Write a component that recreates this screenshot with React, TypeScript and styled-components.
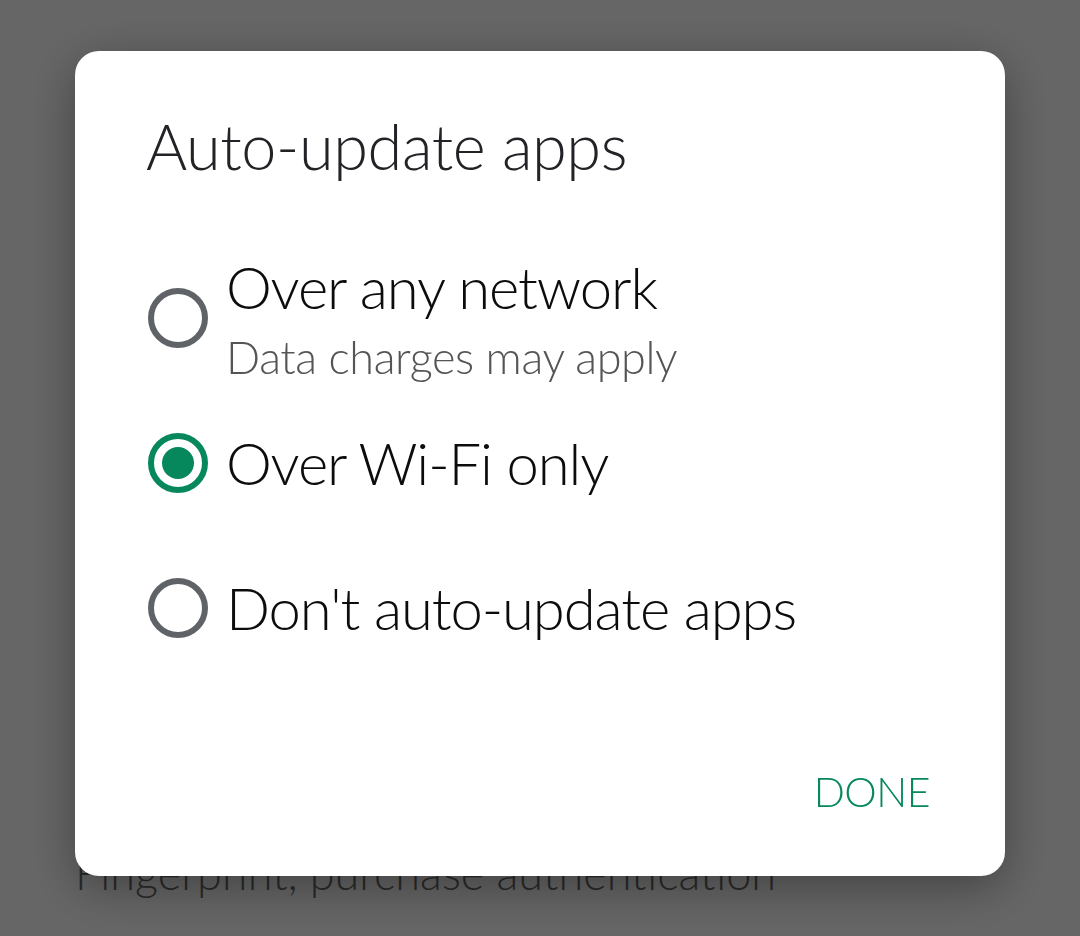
import React, { useState } from "react"
import styled, { createGlobalStyle } from "styled-components"

const GlobalStyle = createGlobalStyle`
  html, body {
    margin: 0;
    padding: 0;
    background: #ffffff;
    overflow: hidden;
  }
  body {
    font-family: "Lato", "Noto Sans", sans-serif;
  }
`

const settings = [
  { title: "App download preference", sub: "Over any network" },
  { title: "Auto-update apps", sub: "Auto-update apps over Wi-Fi only" },
  { title: "Add icon to Home screen", sub: "For new apps" },
]

const options = [
  { id: "any", label: "Over any network", sub: "Data charges may apply" },
  { id: "wifi", label: "Over Wi-Fi only" },
  { id: "never", label: "Don't auto-update apps" },
]

function App() {
  const [choice, setChoice] = useState("wifi")
  return (
    <>
      <GlobalStyle />
      <Page>
        {settings.map((s) => (
          <SettingItem key={s.title}>
            <SettingTitle>{s.title}</SettingTitle>
            <SettingSub>{s.sub}</SettingSub>
          </SettingItem>
        ))}
        <Divider />
        <SettingItem>
          <SettingTitle>Authentication</SettingTitle>
          <SettingSub>Fingerprint, purchase authentication</SettingSub>
        </SettingItem>
      </Page>
      <Scrim />
      <Dialog>
        <Title>Auto-update apps</Title>
        <OptionList>
          {options.map((o) => (
            <OptionRow key={o.id} onClick={() => setChoice(o.id)}>
              <Radio $checked={choice === o.id} />
              <OptionText>
                <OptionLabel>{o.label}</OptionLabel>
                {o.sub && <OptionSub>{o.sub}</OptionSub>}
              </OptionText>
            </OptionRow>
          ))}
        </OptionList>
        <Actions>
          <DoneButton>DONE</DoneButton>
        </Actions>
      </Dialog>
    </>
  )
}

export default App

const Page = styled.div`
  display: flex;
  flex-direction: column;
  padding: 88px 72px 0 75px;
  height: 936px;
  overflow: hidden;
  box-sizing: border-box;
`

const SettingItem = styled.div`
  display: flex;
  flex-direction: column;
  gap: 6px;
  padding-bottom: 108px;
`

const SettingTitle = styled.div`
  font-size: 44px;
  line-height: 54px;
  color: #111;
`

const SettingSub = styled.div`
  font-size: 45px;
  line-height: 48px;
  font-weight: 300;
  color: #6b6b6b;
`

const Divider = styled.div`
  height: 2px;
  background: #bdbdbd;
  margin: -39px 0 92px;
`

const Scrim = styled.div`
  position: fixed;
  inset: 0;
  background: rgba(0, 0, 0, 0.6);
`

const Dialog = styled.div`
  position: fixed;
  top: 51px;
  left: 75px;
  width: 930px;
  height: 825px;
  box-sizing: border-box;
  background: #ffffff;
  border-radius: 24px;
  box-shadow: 0 12px 48px rgba(0, 0, 0, 0.35);
  padding: 57px 75px 0 72px;
  display: flex;
  flex-direction: column;
`

const Title = styled.div`
  font-size: 63px;
  font-weight: 300;
  line-height: 1.2;
  letter-spacing: -0.4px;
  color: #222327;
  margin-left: -1px;
`

const OptionList = styled.div`
  display: flex;
  flex-direction: column;
  margin-top: 62px;
`

const OptionRow = styled.div`
  display: flex;
  align-items: center;
  gap: 18px;
  min-height: 145px;
  cursor: pointer;
`

const Radio = styled.div<{ $checked: boolean }>`
  flex: none;
  width: 60px;
  height: 60px;
  margin-left: 1px;
  box-sizing: border-box;
  border-radius: 50%;
  border: 6px solid ${(p) => (p.$checked ? "#07885c" : "#5f6267")};
  display: flex;
  align-items: center;
  justify-content: center;
  &::after {
    content: "";
    width: 32px;
    height: 32px;
    border-radius: 50%;
    background: #07885c;
    display: ${(p) => (p.$checked ? "block" : "none")};
  }
`

const OptionText = styled.div`
  display: flex;
  flex-direction: column;
  gap: 9px;
`

const OptionLabel = styled.div`
  font-size: 58px;
  font-weight: 300;
  line-height: 1.2;
  letter-spacing: -1.1px;
  color: #0c0c0c;
`

const OptionSub = styled.div`
  font-size: 45px;
  font-weight: 300;
  line-height: 1.2;
  letter-spacing: -0.4px;
  color: #555;
`

const Actions = styled.div`
  display: flex;
  justify-content: flex-end;
  margin-top: auto;
  padding-bottom: 60px;
`

const DoneButton = styled.div`
  font-size: 41px;
  font-weight: 300;
  line-height: 1.2;
  letter-spacing: -0.5px;
  color: #07885c;
  cursor: pointer;
`
